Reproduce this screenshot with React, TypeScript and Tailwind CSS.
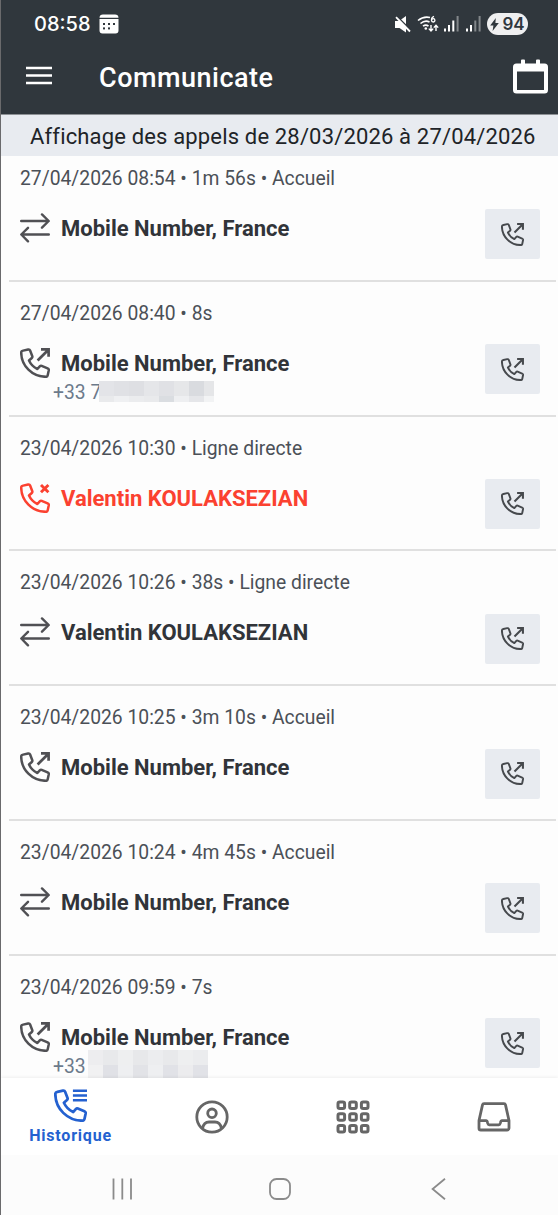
import React, { useState } from "react";

const calls = [
  { date: "27/04/2026 08:54 • 1m 56s • Accueil", name: "Mobile Number, France", type: "transfer" },
  {
    date: "27/04/2026 08:40 • 8s",
    name: "Mobile Number, France",
    type: "outgoing",
    phone: "+33 7",
    mask: "short",
  },
  { date: "23/04/2026 10:30 • Ligne directe", name: "Valentin KOULAKSEZIAN", type: "missed" },
  { date: "23/04/2026 10:26 • 38s • Ligne directe", name: "Valentin KOULAKSEZIAN", type: "transfer" },
  { date: "23/04/2026 10:25 • 3m 10s • Accueil", name: "Mobile Number, France", type: "outgoing" },
  { date: "23/04/2026 10:24 • 4m 45s • Accueil", name: "Mobile Number, France", type: "transfer" },
  {
    date: "23/04/2026 09:59 • 7s",
    name: "Mobile Number, France",
    type: "outgoing",
    phone: "+33",
    mask: "long",
  },
];

const handset =
  "M3.1 2.6L8.1 1.5Q9.6 1.2 10.1 2.5L12.3 8.2Q12.6 9.3 11.8 10L9 12.5C10.8 16.4 13.6 19.2 17.4 21L20 18.1Q20.7 17.4 21.7 17.8L27.6 20.3Q29 20.9 28.8 22.2L27.7 27.3Q27.4 28.8 26 28.8C12.2 28.8 1.2 18 1.2 4.4Q1.2 3 3.1 2.6Z";

const PhoneIcon = ({ className, type }: { className: string; type: string }) => (
  <svg viewBox="0 0 30 30" className={className} fill="none" stroke="currentColor" strokeWidth={2.5}>
    <path d={handset} strokeLinejoin="round" />
    {type === "outgoing" && <path d="M17.6 12.5L28.4 1.7M21 1.4H28.6V8.8" strokeWidth={2.7} />}
    {type === "missed" && <path d="M21 2L28.4 9.2M28.4 2L21 9.2" strokeWidth={2.9} />}
    {type === "history" && <path d="M17.2 1.5H30M17.2 5.9H30M17.2 10.3H30" strokeWidth={2.3} />}
  </svg>
);

const TransferIcon = () => (
  <svg
    viewBox="0 0 30 30"
    className="size-[30px]"
    fill="none"
    stroke="currentColor"
    strokeWidth={2.4}
    strokeLinecap="round"
    strokeLinejoin="round"
  >
    <path d="M1.2 8H28.6M22 1.4L28.7 8L22 14.7M28.8 21.5H1.4M8 14.8L1.3 21.5L8 28.3" />
  </svg>
);

const Mask = ({ size }: { size: string }) => {
  if (size === "short") {
    return (
      <div className="grid h-[21px] w-[115px] grid-cols-[15px_15px_15px_15px_15px_15px_15px_10px] grid-rows-[15px_6px]">
        <div className="bg-[#e3e4e8]" />
        <div className="bg-[#e0e1e5]" />
        <div className="bg-[#dedfe3]" />
        <div className="bg-[#e5e6e9]" />
        <div className="bg-[#e0e1e5]" />
        <div className="bg-[#e6e7e9]" />
        <div className="bg-[#d9dbdf]" />
        <div className="bg-[#e5e6e8]" />
        <div className="bg-[#e9eaec]" />
        <div className="bg-[#eff0f2]" />
        <div className="bg-[#ebecee]" />
        <div className="bg-[#e9eaec]" />
        <div className="bg-[#dadde1]" />
        <div className="bg-[#eeeff1]" />
        <div className="bg-[#e5e6e9]" />
        <div className="bg-[#f2f3f4]" />
      </div>
    );
  }
  return (
    <div className="grid h-[30px] w-[120px] grid-cols-8 grid-rows-2">
      <div className="bg-[#ededef]" />
      <div className="bg-[#e8e9eb]" />
      <div className="bg-[#eeeff0]" />
      <div className="bg-[#e7e8ea]" />
      <div className="bg-[#ecedef]" />
      <div className="bg-[#e8e9eb]" />
      <div className="bg-[#eeeff0]" />
      <div className="bg-[#ebecee]" />
      <div className="bg-[#f1f1f2]" />
      <div className="bg-[#e0e1e6]" />
      <div className="bg-[#eeeff1]" />
      <div className="bg-[#e2e3e7]" />
      <div className="bg-[#eeeff1]" />
      <div className="bg-[#e1e2e7]" />
      <div className="bg-[#ececee]" />
      <div className="bg-[#e1e2e7]" />
    </div>
  );
};

const CallRow = ({ call }: { call: (typeof calls)[number] }) => {
  const missed = call.type === "missed";
  return (
    <li className="ml-2 mr-0.5 flex h-[134.8px] shrink-0 justify-between border-b-2 border-[#e0e0e0] pl-[11px] pr-4">
      <div className="pt-[18px]">
        <p className="whitespace-nowrap text-[19.3px] leading-7 tracking-[0.01px] text-[#4b5057]">
          {call.date}
        </p>
        <div
          className={
            missed
              ? "mt-5 flex h-[30px] items-start gap-[11px] text-[#fb4130]"
              : "mt-5 flex h-[30px] items-start gap-[11px] text-[#505054]"
          }
        >
          {call.type === "transfer" ? (
            <TransferIcon />
          ) : (
            <PhoneIcon type={call.type} className="size-[30px]" />
          )}
          <span
            className={
              missed
                ? "whitespace-nowrap text-[22px] font-bold leading-8"
                : "whitespace-nowrap text-[22px] font-bold leading-8 text-[#313439]"
            }
          >
            {call.name}
          </span>
        </div>
        {call.phone && (
          <div className="flex pl-[33px]">
            <span
              className={
                call.mask === "short"
                  ? "w-[46px] whitespace-nowrap pt-[3px] text-[19.3px] leading-6 text-[#6c7a8b]"
                  : "w-[35px] whitespace-nowrap pt-[3px] text-[19.3px] leading-6 text-[#6c7a8b]"
              }
            >
              {call.phone}
            </span>
            <div className={call.mask === "short" ? "pt-[3px]" : "-mt-0.5"}>
              <Mask size={call.mask || "short"} />
            </div>
          </div>
        )}
      </div>
      <button className="mt-[62.4px] flex h-[50px] w-[55px] items-center justify-center rounded-xs bg-[#e8ebf0] text-[#46494d]">
        <PhoneIcon type="outgoing" className="size-[23px]" />
      </button>
    </li>
  );
};

const StatusBar = () => (
  <div className="flex h-12 items-center justify-between pl-[33px] pr-[30px]">
    <div className="flex items-center gap-2">
      <span className="font-['Inter'] text-[20px] font-medium">08:58</span>
      <svg viewBox="0 0 20 20" className="size-5" fill="currentColor">
        <path d="M4 .5H16A3.5 3.5 0 0 1 19.5 3.8H.5A3.5 3.5 0 0 1 4 .5Z" />
        <path d="M.5 5H19.5V16.5A3 3 0 0 1 16.5 19.5H3.5A3 3 0 0 1 .5 16.5Z" />
        <g fill="#30373d">
          <rect x="4" y="9" width="2" height="2" />
          <rect x="9" y="9" width="2" height="2" />
          <rect x="14" y="9" width="2" height="2" />
          <rect x="4" y="13.4" width="2" height="2" />
          <rect x="9" y="13.4" width="2" height="2" />
        </g>
      </svg>
    </div>
    <div className="flex items-center">
      <svg viewBox="0 0 17 17" className="h-[17px] w-[17px]" fill="currentColor">
        <path d="M1 5H5L12 0V16.5L5.5 12H1Z" />
        <path d="M3.2 .6L17 14.4" stroke="#30373d" strokeWidth="1.6" />
        <path d="M2 1.2L16 15.5" stroke="currentColor" strokeWidth="1.8" />
      </svg>
      <svg
        viewBox="0 0 22 18"
        className="ml-[6px] h-[18px] w-[22px]"
        fill="none"
        stroke="currentColor"
        strokeWidth="1.6"
      >
        <path d="M1 5.5Q6.5 1 13 2.5M3.5 8.5Q8 4.8 12.5 7M6 11.2Q8.8 9 11.5 11.2" />
        <circle cx="8.8" cy="13.5" r="1.3" fill="currentColor" stroke="none" />
        <path d="M17 1.4Q14.5 2.2 14.5 5.2" strokeWidth="1.3" />
        <circle cx="16.2" cy="5.3" r="1.7" strokeWidth="1.3" />
        <path d="M14 10V15.5M11.8 13.6L14 16L16.2 13.6M19 16V10.5M16.8 12.6L19 10.2L21.2 12.6" strokeWidth="1.4" />
      </svg>
      <svg viewBox="0 0 15 16" className="ml-[5px] h-4 w-[15px]" fill="currentColor">
        <rect x="0" y="12.5" width="2" height="3" />
        <rect x="4" y="9" width="2" height="6.5" />
        <rect x="8.3" y="4.5" width="2" height="11" />
        <rect x="12.6" y="0" width="2" height="15.5" opacity=".4" />
      </svg>
      <svg viewBox="0 0 15 16" className="ml-[7px] h-4 w-[15px]" fill="currentColor">
        <rect x="0" y="12.5" width="2" height="3" />
        <rect x="4" y="9" width="2" height="6.5" />
        <rect x="8.3" y="4.5" width="2" height="11" opacity=".4" />
        <rect x="12.6" y="0" width="2" height="15.5" opacity=".4" />
      </svg>
      <div className="ml-[6px] flex h-[22px] w-[41px] items-center justify-center gap-[3px] rounded-full bg-[#efeff0] text-[#30373d]">
        <svg viewBox="0 0 9 13" className="h-[13px] w-[9px]" fill="currentColor">
          <path d="M5.8 0L.2 7.5H3.4L2.6 13L8.8 5H5.4Z" />
        </svg>
        <span className="font-['Inter'] text-[17px] font-semibold leading-none">94</span>
      </div>
    </div>
  </div>
);

const Header = () => (
  <header className="h-[115px] shrink-0 border-b border-[#8d9195] bg-[#30373d] text-white">
    <StatusBar />
    <div className="flex h-14 items-center pl-[25px] pr-[10px]">
      <button className="flex w-[26px] flex-col">
        <svg viewBox="0 0 26 20" className="h-5 w-[26px]" stroke="currentColor" strokeWidth="2.6">
          <path d="M0 2H26M0 9.5H26M0 17H26" />
        </svg>
      </button>
      <h1 className="ml-[47px] grow pt-1 text-[27px] font-medium tracking-[0.5px]">Communicate</h1>
      <svg viewBox="0 0 35 35" className="size-[35px]" fill="currentColor">
        <path d="M8 6V1.5Q8 .5 9 .5H11Q12 .5 12 1.5V6ZM23 6V1.5Q23 .5 24 .5H26Q27 .5 27 1.5V6Z" />
        <path
          fillRule="evenodd"
          d="M3.5 4.5H31.5A3.5 3.5 0 0 1 35 8V31A3.5 3.5 0 0 1 31.5 34.5H3.5A3.5 3.5 0 0 1 0 31V8A3.5 3.5 0 0 1 3.5 4.5ZM4 12.5V31H31V12.5Z"
        />
      </svg>
    </div>
  </header>
);

const TabBar = () => (
  <nav className="flex h-[77px] shrink-0 overflow-hidden bg-white text-[#666] shadow-[0_-1px_3px_rgba(0,0,0,0.06)]">
    <button className="flex w-[139px] shrink-0 flex-col items-center pt-[11px] text-[#2461d0]">
      <PhoneIcon type="history" className="size-[33px]" />
      <span className="mt-0.5 text-[16px] font-bold leading-6 tracking-[0.8px]">Historique</span>
    </button>
    <button className="flex w-[143px] shrink-0 items-center justify-center">
      <svg viewBox="0 0 34 34" className="size-[34px]" fill="none" stroke="currentColor" strokeWidth="2.8">
        <circle cx="17" cy="17" r="15.2" />
        <circle cx="17" cy="13.3" r="4.3" />
        <path d="M7.5 28.5C8.5 23.5 11 22 14 22H20C23 22 25.5 23.5 26.5 28.5" />
      </svg>
    </button>
    <button className="flex w-[139px] shrink-0 items-center justify-center">
      <svg viewBox="0 0 34 34" className="size-[34px]" fill="none" stroke="currentColor" strokeWidth="3">
        {[2, 13.7, 25.4].map((y) =>
          [2, 13.7, 25.4].map((x) => (
            <rect key={`${x}-${y}`} x={x} y={y} width="6.6" height="6.6" rx="1.8" />
          ))
        )}
      </svg>
    </button>
    <button className="flex w-[143px] shrink-0 items-center justify-center">
      <svg
        viewBox="0 0 34 34"
        className="size-[34px]"
        fill="none"
        stroke="currentColor"
        strokeWidth="2.8"
        strokeLinejoin="round"
      >
        <path d="M7 3.7H27Q28.2 3.7 28.5 4.9L32 20.5V28.2Q32 30 30.2 30H3.8Q2 30 2 28.2V20.5L5.5 4.9Q5.8 3.7 7 3.7Z" />
        <path d="M2 20.7H9.3Q10.2 20.7 10.5 22.3L10.8 23.5Q11.1 24.8 12.2 24.8H21.8Q22.9 24.8 23.2 23.5L23.5 22.3Q23.8 20.7 24.7 20.7H32" />
      </svg>
    </button>
  </nav>
);

const SystemBar = () => (
  <div className="flex h-[60px] shrink-0 items-center bg-[#fcfcfc] pl-[111px] pt-[7px] text-[#8b8b8b]">
    <svg viewBox="0 0 21 22" className="h-[22px] w-[21px]" fill="none" stroke="currentColor" strokeWidth="1.8">
      <path d="M1.5 .5V21.5M10.3 .5V21.5M19 .5V21.5" />
    </svg>
    <svg
      viewBox="0 0 22 22"
      className="ml-[136px] size-[22px]"
      fill="none"
      stroke="currentColor"
      strokeWidth="1.8"
    >
      <rect x="1" y="1" width="20" height="20" rx="6.5" />
    </svg>
    <svg
      viewBox="0 0 15 22"
      className="ml-[140px] h-[22px] w-[15px]"
      fill="none"
      stroke="currentColor"
      strokeWidth="1.8"
    >
      <path d="M14 .7L1.6 11L14 21.3" />
    </svg>
  </div>
);

const App = () => {
  const [callList] = useState(calls);

  return (
    <div className="flex h-[1215px] w-[558px] flex-col overflow-hidden border-l border-[#6a6a6c] bg-[#fdfdfd] font-['Roboto',sans-serif]">
      <Header />
      <div className="flex h-[41px] shrink-0 items-center whitespace-nowrap bg-[#e8ebf0] pl-[29px] pt-px text-[22px] tracking-[0.16px] text-[#202327]">
        Affichage des appels de 28/03/2026 à 27/04/2026
      </div>
      <main className="min-h-0 grow overflow-hidden">
        <ul className="-mt-[9px] flex flex-col">
          {callList.map((call, i) => (
            <CallRow key={i} call={call} />
          ))}
        </ul>
      </main>
      <TabBar />
      <SystemBar />
    </div>
  );
};

export default App;
